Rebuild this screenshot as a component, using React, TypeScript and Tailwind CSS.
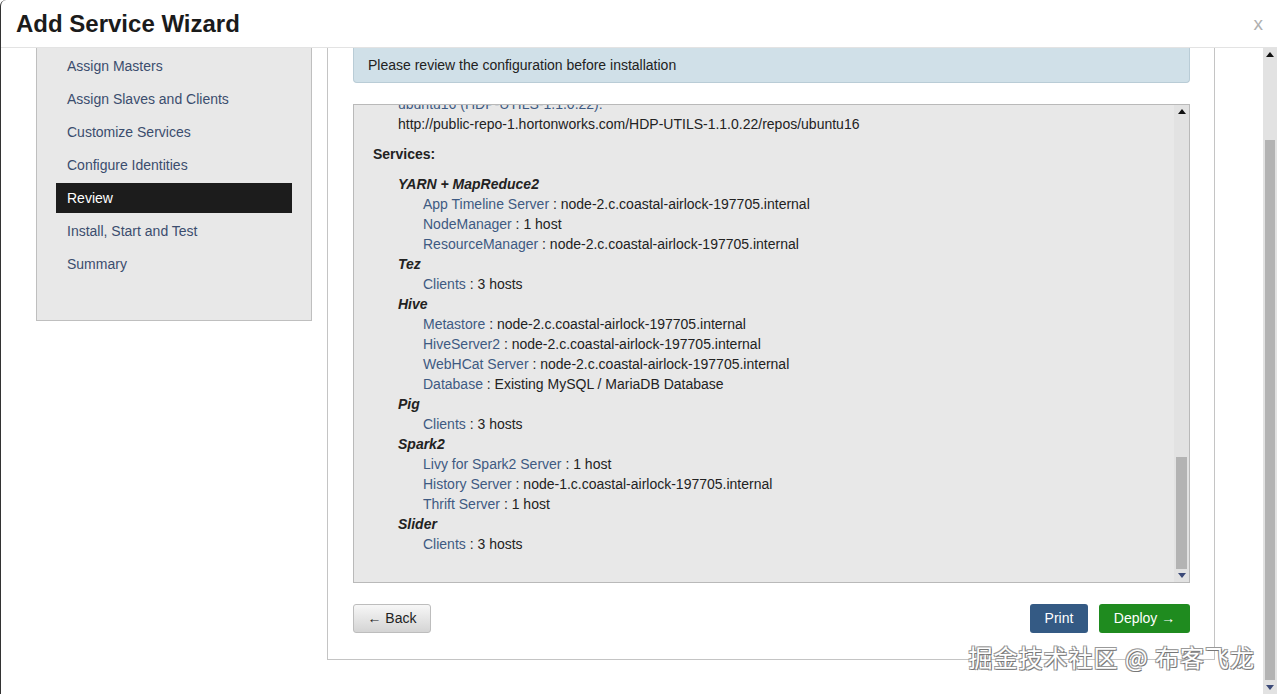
import React from 'react';

const font = { fontFamily: '"Liberation Sans", Arial, sans-serif' };

const STEPS = [
  'Assign Masters',
  'Assign Slaves and Clients',
  'Customize Services',
  'Configure Identities',
  'Review',
  'Install, Start and Test',
  'Summary',
];

type Row = [string, string];
const SERVICES: { name: string; rows: Row[] }[] = [
  {
    name: 'YARN + MapReduce2',
    rows: [
      ['App Timeline Server', 'node-2.c.coastal-airlock-197705.internal'],
      ['NodeManager', '1 host'],
      ['ResourceManager', 'node-2.c.coastal-airlock-197705.internal'],
    ],
  },
  { name: 'Tez', rows: [['Clients', '3 hosts']] },
  {
    name: 'Hive',
    rows: [
      ['Metastore', 'node-2.c.coastal-airlock-197705.internal'],
      ['HiveServer2', 'node-2.c.coastal-airlock-197705.internal'],
      ['WebHCat Server', 'node-2.c.coastal-airlock-197705.internal'],
      ['Database', 'Existing MySQL / MariaDB Database'],
    ],
  },
  { name: 'Pig', rows: [['Clients', '3 hosts']] },
  {
    name: 'Spark2',
    rows: [
      ['Livy for Spark2 Server', '1 host'],
      ['History Server', 'node-1.c.coastal-airlock-197705.internal'],
      ['Thrift Server', '1 host'],
    ],
  },
  { name: 'Slider', rows: [['Clients', '3 hosts']] },
];

// fake classic scrollbar
const Scrollbar: React.FC<{ thumbTop: number; thumbHeight: number; className?: string }> = ({ thumbTop, thumbHeight, className }) => (
  <div className={`relative bg-[#e2e2e2] ${className ?? ''}`}>
    <div className="absolute left-0 right-0 top-[4px] flex justify-center">
      <div className="w-0 h-0 border-l-[4px] border-r-[4px] border-b-[5px] border-l-transparent border-r-transparent border-b-[#111]" />
    </div>
    <div
      className="absolute left-[2px] right-[2px] bg-[#b3b3b3]"
      style={{ top: thumbTop, height: thumbHeight }}
    />
    <div className="absolute left-0 right-0 bottom-[4px] flex justify-center">
      <div className="w-0 h-0 border-l-[4px] border-r-[4px] border-t-[5px] border-l-transparent border-r-transparent border-t-[#3c4a78]" />
    </div>
  </div>
);

export default function App() {
  return (
    <div className="w-[1277px] h-[694px] overflow-hidden bg-white relative flex flex-col border-l border-[#333] rounded-tl-[6px]" style={font}>
      {/* Header */}
      <div className="h-[48px] shrink-0 flex items-center justify-between pl-[15px] pr-[14px] border-b border-[#e3e3e3]">
        <h1 className="text-[24px] font-bold text-[#1b1b1b] leading-none">Add Service Wizard</h1>
        <span className="text-[19px] text-[#b0b0b0] leading-none">x</span>
      </div>

      {/* Body */}
      <div className="flex flex-1 min-h-0">
        <div className="flex-1 flex items-start">
          {/* Sidebar */}
          <div className="ml-[35px] w-[276px] bg-[#e8e8e8] border-l border-r border-b border-[#bfbfbf] pt-[3px] pb-[38px] px-[19px]">
            {STEPS.map((s) => (
              <div
                key={s}
                className={`h-[30px] mb-[3px] flex items-center pl-[11px] text-[14px] ${
                  s === 'Review' ? 'bg-[#1c1c1c] text-white' : 'text-[#3b4d6e]'
                }`}
              >
                {s}
              </div>
            ))}
          </div>

          {/* Main panel */}
          <div className="ml-[15px] w-[888px] border-l border-r border-b border-[#c4c4c4] pl-[25px] pr-[24px] pb-[26px]">
            <div className="h-[35px] bg-[#d0e0e8] border-l border-r border-b border-[#b9ccd6] rounded-b-[4px] flex items-center pl-[14px] text-[14px] text-[#222]">
              Please review the configuration before installation
            </div>

            <div className="mt-[21px] h-[479px] bg-[#e8e8e8] border border-[#b9b9b9] flex overflow-hidden">
              <div className="flex-1 overflow-hidden text-[14px] leading-[20px] text-[#222]">
                <div className="-mt-[11px] pl-[19px]">
                  <div className="pl-[25px] text-[#3e5a82]">ubuntu16 (HDP-UTILS-1.1.0.22):</div>
                  <div className="pl-[25px]">http://public-repo-1.hortonworks.com/HDP-UTILS-1.1.0.22/repos/ubuntu16</div>
                  <div className="mt-[10px] font-bold">Services:</div>
                  <div className="mt-[10px] pl-[25px]">
                    {SERVICES.map((svc) => (
                      <div key={svc.name}>
                        <div className="font-bold italic">{svc.name}</div>
                        {svc.rows.map(([k, v]) => (
                          <div key={k} className="pl-[25px]">
                            <span className="text-[#3e5a82]">{k}</span> : {v}
                          </div>
                        ))}
                      </div>
                    ))}
                  </div>
                </div>
              </div>
              <Scrollbar className="w-[15px] shrink-0" thumbTop={352} thumbHeight={112} />
            </div>

            <div className="mt-[21px] flex items-center">
              <button className="h-[29px] w-[78px] rounded-[3px] border border-[#bdbdbd] bg-gradient-to-b from-[#f7f7f7] to-[#d4d4d4] text-[14px] text-[#222]">
                ← Back
              </button>
              <div className="flex-1" />
              <button className="h-[29px] w-[58px] rounded-[3px] bg-[#345a84] text-[14px] text-white">Print</button>
              <button className="ml-[11px] h-[29px] w-[91px] rounded-[3px] bg-[#1f8b1f] text-[14px] text-white">Deploy →</button>
            </div>
          </div>
        </div>

        <Scrollbar className="w-[14px] shrink-0" thumbTop={92} thumbHeight={540} />
      </div>

      {/* Watermark */}
      <div
        className="absolute right-[22px] bottom-[19px] text-[24px] text-white tracking-[1px]"
        style={{ fontFamily: '"Noto Sans CJK SC", sans-serif', textShadow: '1px 1px 0 #777, -1px -1px 0 #999, 1px -1px 0 #999, -1px 1px 0 #999' }}
      >
        掘金技术社区 @ 布客飞龙
      </div>
    </div>
  );
}
